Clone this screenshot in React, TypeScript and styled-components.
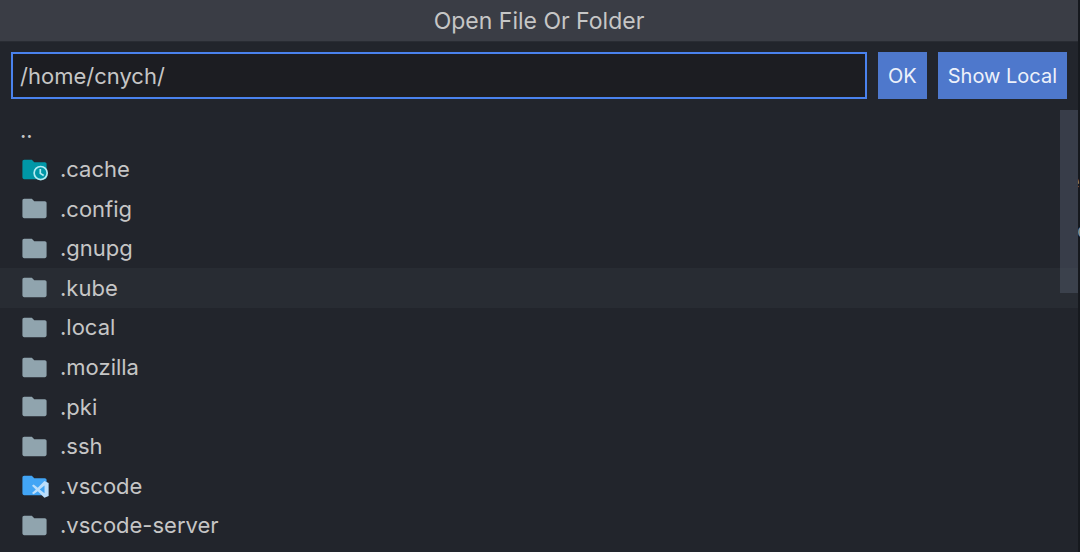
import React, { useState } from "react";
import styled, { createGlobalStyle } from "styled-components";

const GlobalStyle = createGlobalStyle`
  * { box-sizing: border-box; }
  html, body { margin: 0; padding: 0; background: #16191e; }
  body, input, button { font-family: Inter, "Liberation Sans", sans-serif; }
`;

const Workbench = styled.div`
  position: relative;
  padding-right: 2px;
  overflow: hidden;
`;

const Dialog = styled.main`
  position: relative;
  display: flex;
  flex-direction: column;
  min-height: 100vh;
  background: #22252c;
  color: #c6c6c6;
`;

const Title = styled.h1`
  margin: 0;
  height: 42px;
  border-bottom: 1px solid #292c33;
  background: #3a3d45;
  font-size: 23px;
  font-weight: 400;
  line-height: 42px;
  text-align: center;
`;

const PathBar = styled.form`
  display: flex;
  gap: 11px;
  padding: 10px 11px 11px;
`;

const PathInput = styled.input`
  flex: 1;
  min-width: 0;
  height: 47px;
  padding: 0 7px;
  border: 2px solid #4a82ee;
  border-radius: 0;
  outline: none;
  background: #1c1d22;
  color: #c6c6c6;
  font-size: 22px;
`;

const Button = styled.button`
  height: 47px;
  padding: 0 10px;
  border: 0;
  background: #4e78cc;
  color: #edf1fa;
  font-size: 20px;
  white-space: nowrap;
`;

const ListArea = styled.section`
  position: relative;
  display: flex;
  flex: 1;
  padding-bottom: 7px;
`;

const FileList = styled.ul`
  flex: 1;
  display: grid;
  grid-auto-rows: 1fr;
  margin: 0;
  padding: 0;
  list-style: none;
`;

const Row = styled.li<{ $hover?: boolean }>`
  display: flex;
  align-items: center;
  gap: 11px;
  padding-left: 20px;
  background: ${(p) => (p.$hover ? "#282c33" : "transparent")};
  font-size: 22px;
  line-height: 28px;
`;

const Icon = styled.svg`
  flex: none;
  width: 29px;
  height: 29px;
  overflow: visible;
`;

const ScrollThumb = styled.div`
  position: absolute;
  top: 0;
  right: 0;
  width: 18px;
  height: 183px;
  background: rgba(78, 86, 102, 0.5);
`;

const EditorText = styled.span<{ $top: number; $inset: number }>`
  position: absolute;
  top: ${(p) => p.$top}px;
  left: calc(100% - ${(p) => p.$inset}px);
  color: #8d8e90;
  font-size: 22px;
  line-height: 24px;
`;

type Kind = "folder" | "cache" | "vscode";

const fills: Record<Kind, string> = {
  folder: "#90a4ae",
  cache: "#0097a7",
  vscode: "#42a5f5",
};

function FolderIcon({ kind }: { kind: Kind }) {
  return (
    <Icon viewBox="0 0 24 24" aria-hidden="true">
      <path
        fill={fills[kind]}
        d="M9.800 4H3.500C2.600 4 2 4.600 2 5.500v13c0 .9.6 1.500 1.500 1.500h17c.9 0 1.500-.6 1.500-1.500v-11c0-.9-.6-1.500-1.500-1.500H11.800z"
      />
      {kind === "cache" && (
        <g fill="none" stroke="#b2ebf2" strokeWidth="1.400">
          <circle cx="17.100" cy="14.900" r="5.400" fill="#0097a7" />
          <path d="M16.800 11.500v3.700l2.800 1.800" />
        </g>
      )}
      {kind === "vscode" && (
        <path
          fill="#bbdefb"
          fillRule="evenodd"
          d="M20.200 8.300 23.700 9.900V20.600L20.200 22.200 14.700 16.700 11.300 19.300 9.900 18.300 13.100 15.300 9.900 12.200 11.300 11.200 14.700 13.800zM20.300 12 16.300 15.300 20.300 18.500z"
        />
      )}
    </Icon>
  );
}

const entries: { name: string; kind: Kind }[] = [
  { name: ".cache", kind: "cache" },
  { name: ".config", kind: "folder" },
  { name: ".gnupg", kind: "folder" },
  { name: ".kube", kind: "folder" },
  { name: ".local", kind: "folder" },
  { name: ".mozilla", kind: "folder" },
  { name: ".pki", kind: "folder" },
  { name: ".ssh", kind: "folder" },
  { name: ".vscode", kind: "vscode" },
  { name: ".vscode-server", kind: "folder" },
];

export default function App() {
  const [path, setPath] = useState("/home/cnych/");
  return (
    <Workbench>
      <GlobalStyle />
      <EditorText $top={169} $inset={13} aria-hidden="true">e</EditorText>
      <EditorText $top={218} $inset={3} aria-hidden="true">o</EditorText>
      <Dialog>
        <Title>Open File Or Folder</Title>
        <PathBar onSubmit={(e) => e.preventDefault()}>
          <PathInput
            aria-label="Path"
            value={path}
            onChange={(e) => setPath(e.target.value)}
          />
          <Button type="submit">OK</Button>
          <Button type="button">Show Local</Button>
        </PathBar>
        <ListArea>
          <FileList>
            <Row>..</Row>
            {entries.map((entry) => (
              <Row key={entry.name} $hover={entry.name === ".kube"}>
                <FolderIcon kind={entry.kind} />
                {entry.name}
              </Row>
            ))}
          </FileList>
          <ScrollThumb />
        </ListArea>
      </Dialog>
    </Workbench>
  );
}
